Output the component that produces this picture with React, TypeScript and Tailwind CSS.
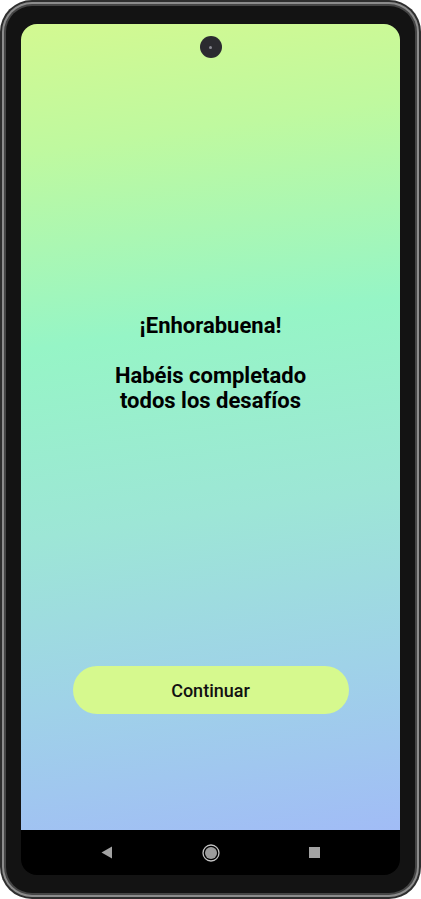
const NavBar = () => {
  return (
    <div className="h-[45px] bg-black rounded-b-[16px] flex items-center justify-center gap-[80px]">
      <div className="w-[24px] flex justify-center">
        <svg width="12" height="13" viewBox="0 0 12 13">
          <path d="M11 0.5 L11 12.5 L0.5 6.5 Z" fill="#a3a3a3" />
        </svg>
      </div>
      <div className="w-[24px] flex justify-center">
        <svg width="18" height="18" viewBox="0 0 18 18">
          <circle cx="9" cy="9" r="8" fill="none" stroke="#c4c4c4" strokeWidth="1.3" />
          <circle cx="9" cy="9" r="6" fill="#9c9c9c" />
        </svg>
      </div>
      <div className="w-[24px] flex justify-center">
        <div className="w-[11px] h-[11px] bg-[#a3a3a3]" />
      </div>
    </div>
  );
};

const App = () => {
  return (
    <div className="w-[421px] h-[899px] bg-white">
      {/* phone rim layers */}
      <div className="h-full rounded-[32px] bg-[#2e2e2e] p-[2px]">
        <div className="h-full rounded-[30px] bg-[#8c8c8c] p-[2px]">
          <div className="h-full rounded-[28px] bg-[#454545] p-[2px]">
            <div className="h-full rounded-[26px] bg-[#131313] px-[15px] pt-[18px] pb-[18px] flex flex-col">
              {/* screen */}
              <div className="h-[806px] rounded-t-[16px] bg-[linear-gradient(172deg,#d3f991_0%,#bff99f_15%,#96f5c6_38%,#9de6d6_60%,#9fd2e8_80%,#a1bcf6_100%)] flex flex-col items-center font-['Roboto',sans-serif]">
                <div className="mt-[12px] w-[22px] h-[22px] rounded-full bg-[#2b2b30] flex items-center justify-center">
                  <div className="w-[3px] h-[3px] rounded-full bg-[#8a8a94]" />
                </div>
                <p className="mt-[255px] text-[22px] leading-[25px] font-bold text-black text-center">
                  ¡Enhorabuena!
                  <br />
                  <br />
                  Habéis completado
                  <br />
                  todos los desafíos
                </p>
                <button className="mt-[253px] w-[276px] h-[48px] rounded-full bg-[#d6f98e] text-[18px] font-medium text-[#111] pt-[1px]">
                  Continuar
                </button>
              </div>
              <NavBar />
            </div>
          </div>
        </div>
      </div>
    </div>
  );
};

export default App;
